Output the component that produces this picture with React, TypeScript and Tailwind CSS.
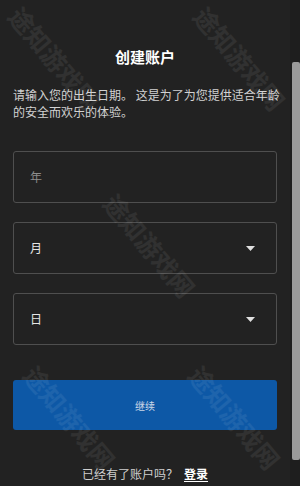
const font = { fontFamily: '"Noto Sans CJK SC", "Noto Sans", sans-serif' };

// faint diagonal watermark that sits on top of the page
function Watermark({ className }: { className: string }) {
  return (
    <div
      className={`pointer-events-none absolute w-[130px] rotate-[50deg] whitespace-nowrap text-center text-[25px] font-bold leading-[30px] text-white/[0.07] ${className}`}
    >
      途知游戏网
    </div>
  );
}

function Field({ label, muted, select }: { label: string; muted?: boolean; select?: boolean }) {
  return (
    <div className="flex h-[52px] items-center justify-between rounded-[3px] border border-[#4f4f4f] pl-[16px] pr-[21px]">
      <span className={`text-[12px] ${muted ? 'text-[#8c8c8c]' : 'text-[#e6e6e6]'}`}>{label}</span>
      {select && (
        <svg width="9" height="5" viewBox="0 0 9 5">
          <path d="M0 0 L9 0 L4.5 5 Z" fill="#e0e0e0" />
        </svg>
      )}
    </div>
  );
}

export default function App() {
  return (
    <div className="relative flex h-[486px] w-[300px] overflow-hidden bg-[#222222]" style={font}>
      <main className="flex w-[290px] flex-col px-[13px] pt-[47px]">
        <h1 className="text-center text-[15px] font-bold leading-[20px] text-white">创建账户</h1>

        <p className="mt-[19px] -mr-[10px] text-[12px] leading-[17px] text-[#d2d2d2]">
          请输入您的出生日期。 这是为了为您提供适合年龄的安全而欢乐的体验。
        </p>

        <div className="mt-[31px] flex flex-col gap-[19px]">
          <Field label="年" muted />
          <Field label="月" select />
          <Field label="日" select />
        </div>

        <button className="mt-[35px] flex h-[50px] items-center justify-center rounded-[3px] bg-[#0d58a6] text-[10px] text-[#c9d6e6]">
          继续
        </button>

        <div className="mt-[35px] flex items-center justify-center gap-[6px] text-[12px] text-[#cfcfcf]">
          <span>已经有了账户吗？</span>
          <span className="font-bold text-white underline underline-offset-2">登录</span>
        </div>
      </main>

      <div className="flex w-[10px] flex-col bg-[#1e1e1e] pt-[62px] pb-[26px] pl-[2px]">
        <div className="flex-1 rounded-[2px] bg-[#9a9a9a]" />
      </div>

      <Watermark className="left-[-10px] top-[43px]" />
      <Watermark className="left-[175px] top-[43px]" />
      <Watermark className="left-[85px] top-[230px]" />
      <Watermark className="left-[5px] top-[402px]" />
      <Watermark className="left-[170px] top-[402px]" />
    </div>
  );
}
